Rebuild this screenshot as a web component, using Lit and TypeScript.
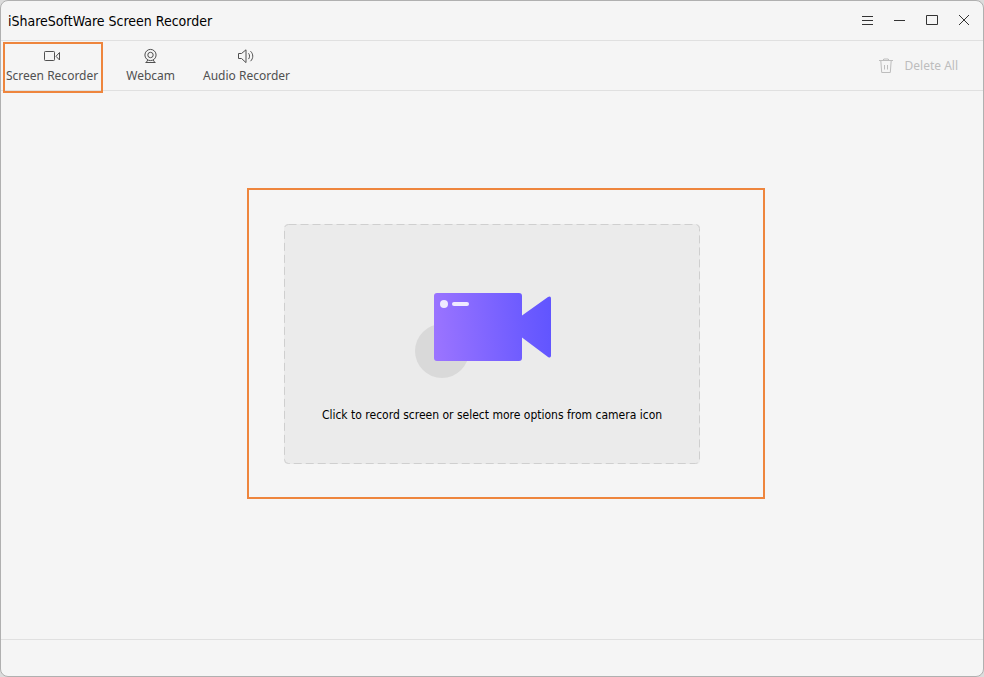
import { LitElement, html, css, svg } from "lit";
import { customElement } from "lit/decorators.js";

const icons = {
  screen: svg`<rect x="1.5" y="3.5" width="10" height="9" rx="0.8"/><path d="M16.500 4.500v7.500l-3.500-3.700z"/>`,
  webcam: svg`<circle cx="8.500" cy="7" r="5.600"/><circle cx="8.500" cy="7" r="2.700"/><path d="M5.700 12l-1.400 2.500h8.400L11.300 12M3.500 14.500h10"/>`,
  audio: svg`<path d="M.5 5.500h3L8 1.800v12.800l-4.500-4.100H.5zM10.500 5.300c1.400 1.500 1.400 4.300 0 5.800M12.500 3.200c3 2.800 3 7.200 0 10"/>`,
};

const tabs = [
  { label: "Screen Recorder", icon: icons.screen, marked: true },
  { label: "Webcam", icon: icons.webcam, marked: false },
  { label: "Audio Recorder", icon: icons.audio, marked: false },
];

const windowControls = [
  { label: "Menu", icon: svg`<path d="M3 3.5h11M3 7.5h11M3 11.5h11"/>` },
  { label: "Minimize", icon: svg`<path d="M3 7.5h11"/>` },
  { label: "Maximize", icon: svg`<path d="M3.5 2.5h11v9h-11z"/>` },
  { label: "Close", icon: svg`<path d="M4 2l10 10M14 2l-10 10"/>` },
];

@customElement("app-root")
export class AppRoot extends LitElement {
  static styles = css`
    :host {
      display: block;
      background: #dcdcdc;
      font-family: "DejaVu Sans Condensed", "Noto Sans", sans-serif;
      font-size: 12px;
      line-height: 16px;
      color: #111;
    }
    * { box-sizing: border-box; }
    button {
      font: inherit;
      color: inherit;
      background: none;
      border: 0;
      padding: 0;
      margin: 0;
      cursor: pointer;
    }
    svg { display: block; fill: none; stroke: currentColor; }
    .window {
      display: flex;
      flex-direction: column;
      min-height: 100vh;
      background: #f5f5f5;
      border: 1px solid #b0b0b0;
      border-radius: 8px;
    }
    .titlebar {
      display: flex;
      align-items: center;
      justify-content: space-between;
      height: 40px;
      padding: 0 10px 0 7px;
      border-bottom: 1px solid #e0e0e0;
    }
    h1 {
      margin: 0;
      font-size: 14px;
      line-height: 20px;
      font-weight: 400;
      color: #000;
    }
    .controls { display: flex; gap: 14px; color: #333; }
    .toolbar {
      display: flex;
      align-items: center;
      justify-content: space-between;
      height: 50px;
      padding: 1px 25px 0 5px;
      border-bottom: 1px solid #e0e0e0;
      font-family: "Noto Sans", "Open Sans", sans-serif;
    }
    .tabs { display: flex; gap: 28px; color: #505050; }
    .tab {
      position: relative;
      display: flex;
      flex-direction: column;
      align-items: center;
      gap: 4px;
      white-space: nowrap;
    }
    .mark {
      position: absolute;
      border: 2px solid #ee853d;
      pointer-events: none;
    }
    .tab .mark { inset: -6px -5px -9px -3px; }
    .delete {
      display: flex;
      align-items: center;
      gap: 11px;
      color: #bdbdbd;
    }
    main {
      flex: 1;
      display: flex;
      align-items: center;
      justify-content: center;
      padding-bottom: 42px;
    }
    .stage { position: relative; }
    .stage > .mark { inset: -36px -65px -35px -37px; }
    .record {
      position: relative;
      display: flex;
      flex-direction: column;
      align-items: center;
      gap: 28px;
      width: 416px;
      height: 240px;
      padding-top: 68px;
      background: #ebebeb;
      border-radius: 4px;
      color: #000;
    }
    .outline { position: absolute; inset: 0; width: 100%; height: 100%; stroke: #cfcfcf; }
    .art { stroke: none; }
    footer { height: 37px; border-top: 1px solid #e0e0e0; }
  `;

  render() {
    return html`
      <div class="window">
        <header class="titlebar">
          <h1>iShareSoftWare Screen Recorder</h1>
          <div class="controls">
            ${windowControls.map(
              (c) => html`<button aria-label=${c.label}>
                <svg width="18" height="16" viewBox="0 0 18 16">${c.icon}</svg>
              </button>`
            )}
          </div>
        </header>
        <div class="toolbar">
          <nav class="tabs">
            ${tabs.map(
              (t) => html`<button class="tab">
                <svg width="18" height="16" viewBox="0 0 18 16">${t.icon}</svg>
                <span>${t.label}</span>
                ${t.marked ? html`<span class="mark"></span>` : null}
              </button>`
            )}
          </nav>
          <button class="delete">
            <svg width="16" height="16" viewBox="0 0 16 16">
              <path d="M1 2.500h14M5 2.500l.8-1.500h4.400l.8 1.500M2.800 2.500l.9 12h8.600l.9-12M6.500 7v4.500M9.500 7v4.500" />
            </svg>
            <span>Delete All</span>
          </button>
        </div>
        <main>
          <div class="stage">
            <button class="record">
              <svg class="outline" viewBox="0 0 416 240" aria-hidden="true">
                <rect x="0.5" y="0.5" width="415" height="239" rx="4" stroke-dasharray="8 4" />
              </svg>
              <svg class="art" width="154" height="87" viewBox="0 0 154 87" aria-hidden="true">
                <defs>
                  <linearGradient id="body" gradientUnits="userSpaceOnUse" x1="19" y1="40" x2="136" y2="30">
                    <stop offset="0" stop-color="#9b74ff" />
                    <stop offset="0.75" stop-color="#6e5cff" />
                    <stop offset="1" stop-color="#6155ff" />
                  </linearGradient>
                </defs>
                <circle cx="27" cy="59" r="27" fill="#d9d9d9" />
                <path
                  fill="url(#body)"
                  d="M22 1h82a3 3 0 0 1 3 3v19.500l26-18.500q3-1.500 3 1.500v57q0 3-3 1.500l-26-19.500V66a3 3 0 0 1-3 3H22a3 3 0 0 1-3-3V4a3 3 0 0 1 3-3z"
                />
                <circle cx="29" cy="12" r="4" fill="#efeaff" />
                <rect x="37" y="10" width="17" height="4" rx="2" fill="#efeaff" />
              </svg>
              <span>Click to record screen or select more options from camera icon</span>
            </button>
            <span class="mark"></span>
          </div>
        </main>
        <footer></footer>
      </div>
    `;
  }
}
